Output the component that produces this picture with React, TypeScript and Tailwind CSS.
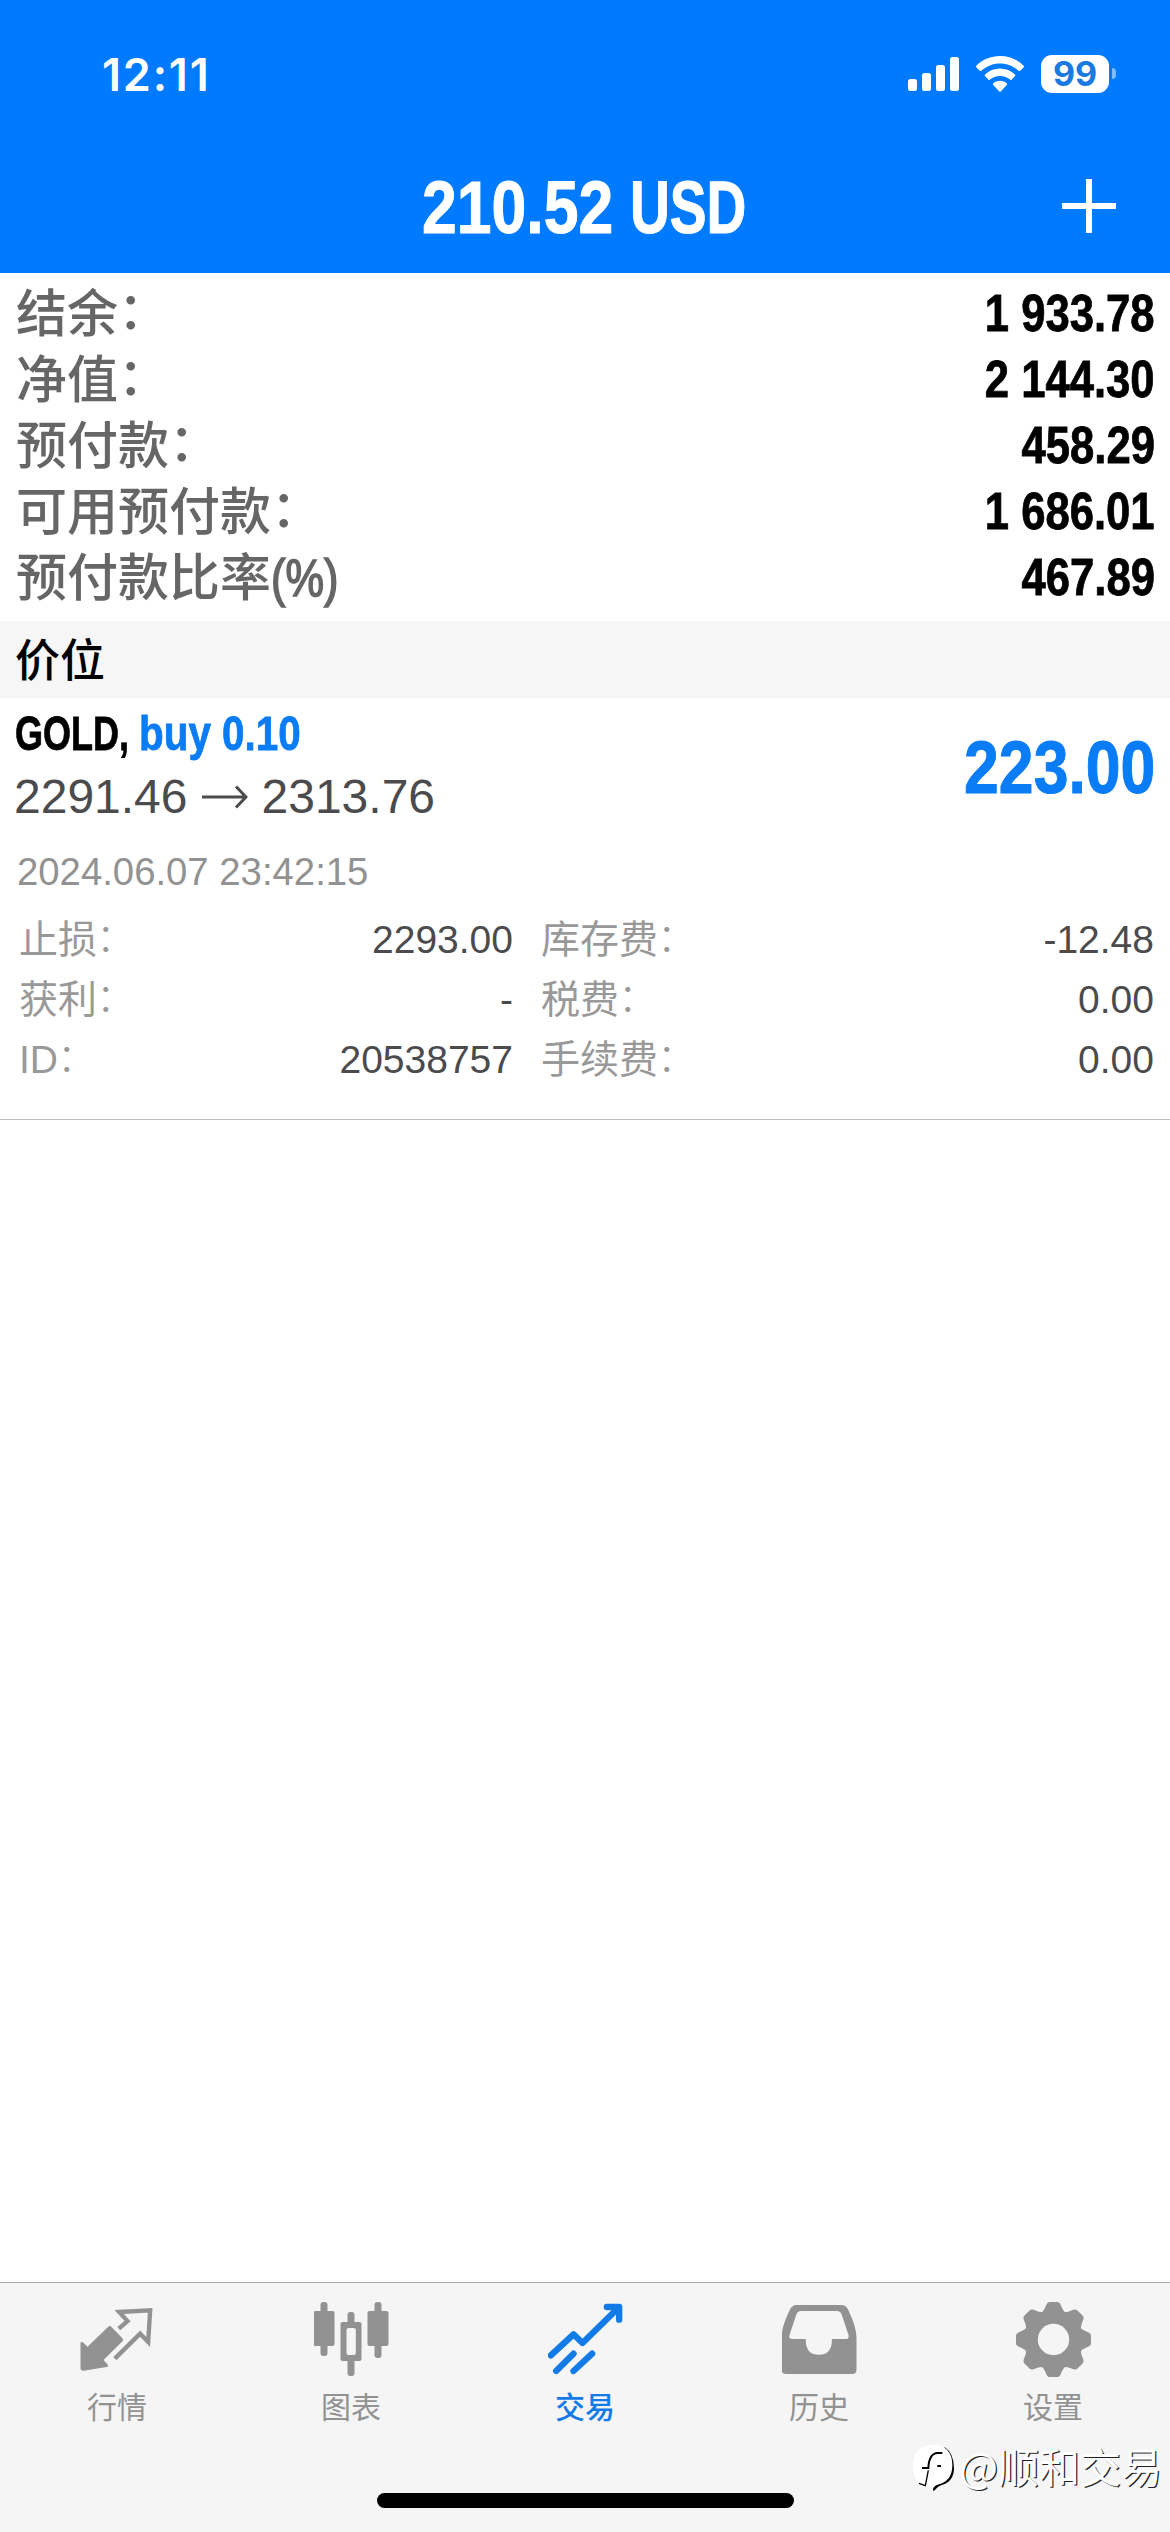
import type { ReactNode } from "react";

const balances = [
  { label: "结余", suffix: "：", value: "1 933.78" },
  { label: "净值", suffix: "：", value: "2 144.30" },
  { label: "预付款", suffix: "：", value: "458.29" },
  { label: "可用预付款", suffix: "：", value: "1 686.01" },
  { label: "预付款比率", suffix: "(%)", value: "467.89" },
];

const details = [
  { label: "止损", value: "2293.00", label2: "库存费", value2: "-12.48" },
  { label: "获利", value: "-", label2: "税费", value2: "0.00" },
  { label: "ID", value: "20538757", label2: "手续费", value2: "0.00" },
];

function StatusBar() {
  return (
    <div className="flex h-[147px] items-center justify-between pr-[54px] pl-[102px]">
      <span className="mt-px font-[Inter] text-[45px] font-semibold leading-none tracking-[1.8px]">12:11</span>
      <div className="flex items-center">
        <svg className="mt-px h-[34px] w-[51px]" viewBox="0 0 51 34" fill="currentColor">
          <rect x="0" y="22" width="9" height="12" rx="2.5" />
          <rect x="14" y="16" width="9" height="18" rx="2.5" />
          <rect x="28" y="8" width="9" height="26" rx="2.5" />
          <rect x="42" y="0" width="9" height="34" rx="2.5" />
        </svg>
        <svg className="ml-[17px] h-[36px] w-[48px]" viewBox="0 0 48 36" fill="currentColor">
          <path d="M24 0C33 0 41.500 3.500 47.500 9.500Q48.300 10.500 47.500 11.400L44.300 14.700Q43.400 15.500 42.500 14.700C37.500 10.300 31.200 7.600 24 7.600S10.500 10.300 5.500 14.700Q4.600 15.500 3.700 14.700L.5 11.400Q-.3 10.500 .5 9.500C6.500 3.500 15 0 24 0Z" />
          <path d="M24 12.600C29.800 12.600 35 14.800 39 18.500Q39.800 19.400 39 20.300L35.700 23.600Q34.800 24.300 33.900 23.600C31.200 21.300 27.800 20 24 20S16.800 21.300 14.100 23.600Q13.200 24.300 12.300 23.600L9 20.300Q8.200 19.400 9 18.500C13 14.800 18.200 12.600 24 12.600Z" />
          <path d="M24 24.800C26.700 24.800 29 25.700 30.700 27.300Q31.400 28.100 30.700 29L25 35.300Q24 36.300 23 35.300L17.300 29Q16.600 28.100 17.300 27.300C19 25.700 21.300 24.800 24 24.800Z" />
        </svg>
        <div className="ml-[17px] flex h-[38px] w-[68px] items-center justify-center rounded-[11px] bg-white font-[Inter] text-[34px] font-bold leading-none text-[#1a7ae0]">
          99
        </div>
        <div className="ml-[3px] h-[11px] w-[4px] rounded-r-full bg-white/50" />
      </div>
    </div>
  );
}

function QuotesIcon() {
  return (
    <svg className="size-[75px]" viewBox="238.5 96 225 225" fill="none">
      <path d="M325 169Q329 167 333 171L367 206Q370 210 366 214L309 270L322 284V290L250 302Q240 303 240 294V216L247 217L261 230Z" fill="currentColor" />
      <path d="M355 176L381 153L356 126L449 121L443 216L419 191L343 266" stroke="currentColor" strokeWidth="13" strokeLinejoin="miter" />
    </svg>
  );
}

function ChartIcon() {
  return (
    <svg className="size-[75px]" viewBox="940.5 96 225 225" fill="currentColor">
      <rect x="960" y="96" width="21" height="162" rx="9" />
      <rect x="939" y="123" width="63" height="105" rx="6" />
      <rect x="1122" y="96" width="21" height="168" rx="9" />
      <rect x="1101" y="123" width="63" height="105" rx="6" />
      <rect x="1041" y="126" width="21" height="36" rx="9" />
      <rect x="1041" y="264" width="21" height="54" rx="9" />
      <path fillRule="evenodd" d="M1026 156H1077Q1083 156 1083 162V267Q1083 273 1077 273H1026Q1020 273 1020 267V162Q1020 156 1026 156ZM1044 174Q1038 174 1038 180V249Q1038 255 1044 255H1060Q1066 255 1066 249V180Q1066 174 1060 174Z" />
    </svg>
  );
}

function TradeIcon() {
  return (
    <svg className="size-[75px]" viewBox="442.5 96 225 225" fill="none" stroke="currentColor" strokeWidth="19" strokeLinecap="round">
      <path d="M451 256L519 193L546 219L653 114" strokeLinejoin="round" />
      <path d="M619 111H656V149" strokeLinejoin="round" />
      <path d="M632 108H660V138Z" fill="currentColor" stroke="none" />
      <path d="M467 303L519 251M519 303L575 251" />
    </svg>
  );
}

function HistoryIcon() {
  return (
    <svg className="size-[75px]" viewBox="34.500 96 225 225" fill="currentColor">
      <path
        fillRule="evenodd"
        d="M78 105H214Q226 105 233 119Q258 170 258 204V299Q258 312 245 312H46Q33 312 33 299V204Q33 170 58 119Q65 105 78 105ZM92 123Q82 123 78 132L57 195Q54 207 65 207H106V215Q108 254 145 254Q182 254 184 215V207H225Q237 207 234 195L213 132Q209 123 199 123Z"
      />
    </svg>
  );
}

function SettingsIcon() {
  return (
    <svg className="size-[75px]" viewBox="-112.500 -112.500 225 225" fill="currentColor">
      <defs>
        <mask id="gear-hole" maskUnits="userSpaceOnUse" x="-120" y="-120" width="240" height="240">
          <rect x="-120" y="-120" width="240" height="240" fill="white" />
          <circle r="47" fill="black" />
        </mask>
      </defs>
      <g mask="url(#gear-hole)">
        <circle r="88" />
        {[0, 45, 90, 135, 180, 225, 270, 315].map((a) => (
          <path key={a} transform={`rotate(${a})`} d="M-37 -80Q-30 -85 -26 -94L-20 -107Q-17 -112.500 -11 -112.500H11Q17 -112.500 20 -107L26 -94Q30 -85 37 -80Z" />
        ))}
      </g>
    </svg>
  );
}

const tabs: { label: string; icon: ReactNode; active?: boolean }[] = [
  { label: "行情", icon: <QuotesIcon /> },
  { label: "图表", icon: <ChartIcon /> },
  { label: "交易", icon: <TradeIcon />, active: true },
  { label: "历史", icon: <HistoryIcon /> },
  { label: "设置", icon: <SettingsIcon /> },
];

function DetailLabel({ children }: { children: string }) {
  return (
    <span className="flex text-[#999]">
      {children}
      <span className="-translate-x-px -translate-y-[2px] font-light">：</span>
    </span>
  );
}

function Watermark() {
  return (
    <div className="absolute top-[157px] right-[8px] flex items-center text-white">
      <svg className="mt-[4px] h-[50px] w-[44px] overflow-visible" viewBox="66 78 132 150" fill="none">
        <path d="M160 86Q189 106 189 150Q189 192 150 202Q138 206 128 220Q122 206 132 198Q175 180 178 150Z" fill="#000" />
        <path d="M126 80Q184 82 184 142Q184 188 144 199Q130 203 126 212L120 203H103L84 198Q66 180 66 140Q68 82 126 80Z" fill="#fff" />
        <path d="M93 150H112Q114 106 140 105H154" stroke="#000" strokeWidth="6" />
        <path d="M112 157L103 203L84 196" stroke="#000" strokeWidth="4" />
        <rect x="139" y="141" width="11" height="6" fill="#000" />
      </svg>
      <span className="-mt-[5px] ml-[2px] whitespace-nowrap font-['Noto_Sans_CJK_SC',sans-serif] text-[41px] leading-[50px] [text-shadow:1.3px_1.3px_0_#222]">@顺和交易</span>
    </div>
  );
}

export default function App() {
  return (
    <div className="flex h-[2532px] w-[1170px] flex-col overflow-hidden bg-white font-['Liberation_Sans','Noto_Sans_CJK_SC',sans-serif]">
      <header className="h-[273px] bg-[#007aff] text-white">
        <StatusBar />
        <div className="relative flex h-[122px] items-center justify-center">
          <h1 className="flex h-[74px] w-[326px] text-[74px] font-bold leading-[74px] whitespace-nowrap [-webkit-text-stroke:1px_currentColor]">
            <span className="block w-[208px] origin-left scale-x-[0.845]">210.52</span>
            <span className="block origin-left scale-x-[0.745]">USD</span>
          </h1>
          <svg className="absolute top-[32px] right-[54px] size-[54px]" viewBox="0 0 54 54" stroke="currentColor" strokeWidth="6">
            <path d="M27 0V54M0 27H54" />
          </svg>
        </div>
      </header>

      <section className="flex h-[348px] flex-col pt-[9px]">
        {balances.map((b) => (
          <div key={b.label} className="flex h-[66px] items-center justify-between pr-[15px] pl-[16px] text-[51px] leading-[66px] whitespace-nowrap">
            <span className="flex font-medium text-[#666]">
              {b.label}
              {b.suffix === "：" ? (
                <span className="-translate-y-[3px]">：</span>
              ) : (
                <span className="origin-left scale-x-[0.85] [-webkit-text-stroke:1.6px_currentColor]">{b.suffix}</span>
              )}
            </span>
            <span className="-mt-[2px] origin-right scale-x-[0.855] font-bold text-black [-webkit-text-stroke:0.8px_currentColor]">{b.value}</span>
          </div>
        ))}
      </section>

      <div className="flex h-[77px] items-center bg-[#f6f6f6] pt-[4px] pl-[15px] text-[45px] font-medium leading-none text-black">价位</div>

      <section className="h-[422px] border-b border-[#c0c0c0] text-[#4b4b4d]">
        <div className="flex h-[136px] justify-between pr-[15px] pl-[14px]">
          <div>
            <div className="flex h-[63px] pt-[8px] pl-px text-[49px] font-bold leading-[54px] whitespace-nowrap [-webkit-text-stroke:0.8px_currentColor]">
              <span className="block w-[124px] origin-left scale-x-[0.735] text-black">GOLD,</span>
              <span className="block origin-left scale-x-[0.825] text-[#0a7cf5]">buy 0.10</span>
            </div>
            <div className="flex h-[72px] items-center text-[48px] leading-none">
              <span>2291.46</span>
              <svg className="mx-[14px] h-[24px] w-[46px]" viewBox="0 0 46 24" fill="none" stroke="currentColor" strokeWidth="3">
                <path d="M0 12H44M34 1.500L44 12L34 22.500" />
              </svg>
              <span>2313.76</span>
            </div>
          </div>
          <span className="mt-[33px] origin-right scale-x-[0.845] text-[74px] font-bold leading-[74px] text-[#0a7cf5] [-webkit-text-stroke:1px_currentColor]">223.00</span>
        </div>
        <div className="h-[76px] pl-[17px] text-[38.300px] leading-[76px] text-[#929292]">2024.06.07 23:42:15</div>
        {details.map((d) => (
          <div key={d.label} className="grid h-[60px] grid-cols-[494px_613px] gap-x-[28px] pl-[19px] text-[39px] leading-[60px]">
            <div className="flex justify-between">
              <DetailLabel>{d.label}</DetailLabel>
              <span>{d.value}</span>
            </div>
            <div className="flex justify-between">
              <DetailLabel>{d.label2}</DetailLabel>
              <span>{d.value2}</span>
            </div>
          </div>
        ))}
      </section>

      <main className="grow" />

      <nav className="relative flex h-[250px] flex-col items-center justify-between border-t border-[#a9a9a9] bg-[#f5f5f5] pb-[24px]">
        <div className="grid w-full grid-cols-5">
          {tabs.map((t) => (
            <div
              key={t.label}
              className={
                t.active
                  ? "flex flex-col items-center pt-[19px] font-medium text-[#127be8]"
                  : "flex flex-col items-center pt-[19px] text-[#929292]"
              }
            >
              {t.icon}
              <span className="mt-[11px] text-[30px] leading-[40px]">{t.label}</span>
            </div>
          ))}
        </div>
        <div className="h-[15px] w-[417px] rounded-full bg-black" />
        <Watermark />
      </nav>
    </div>
  );
}
